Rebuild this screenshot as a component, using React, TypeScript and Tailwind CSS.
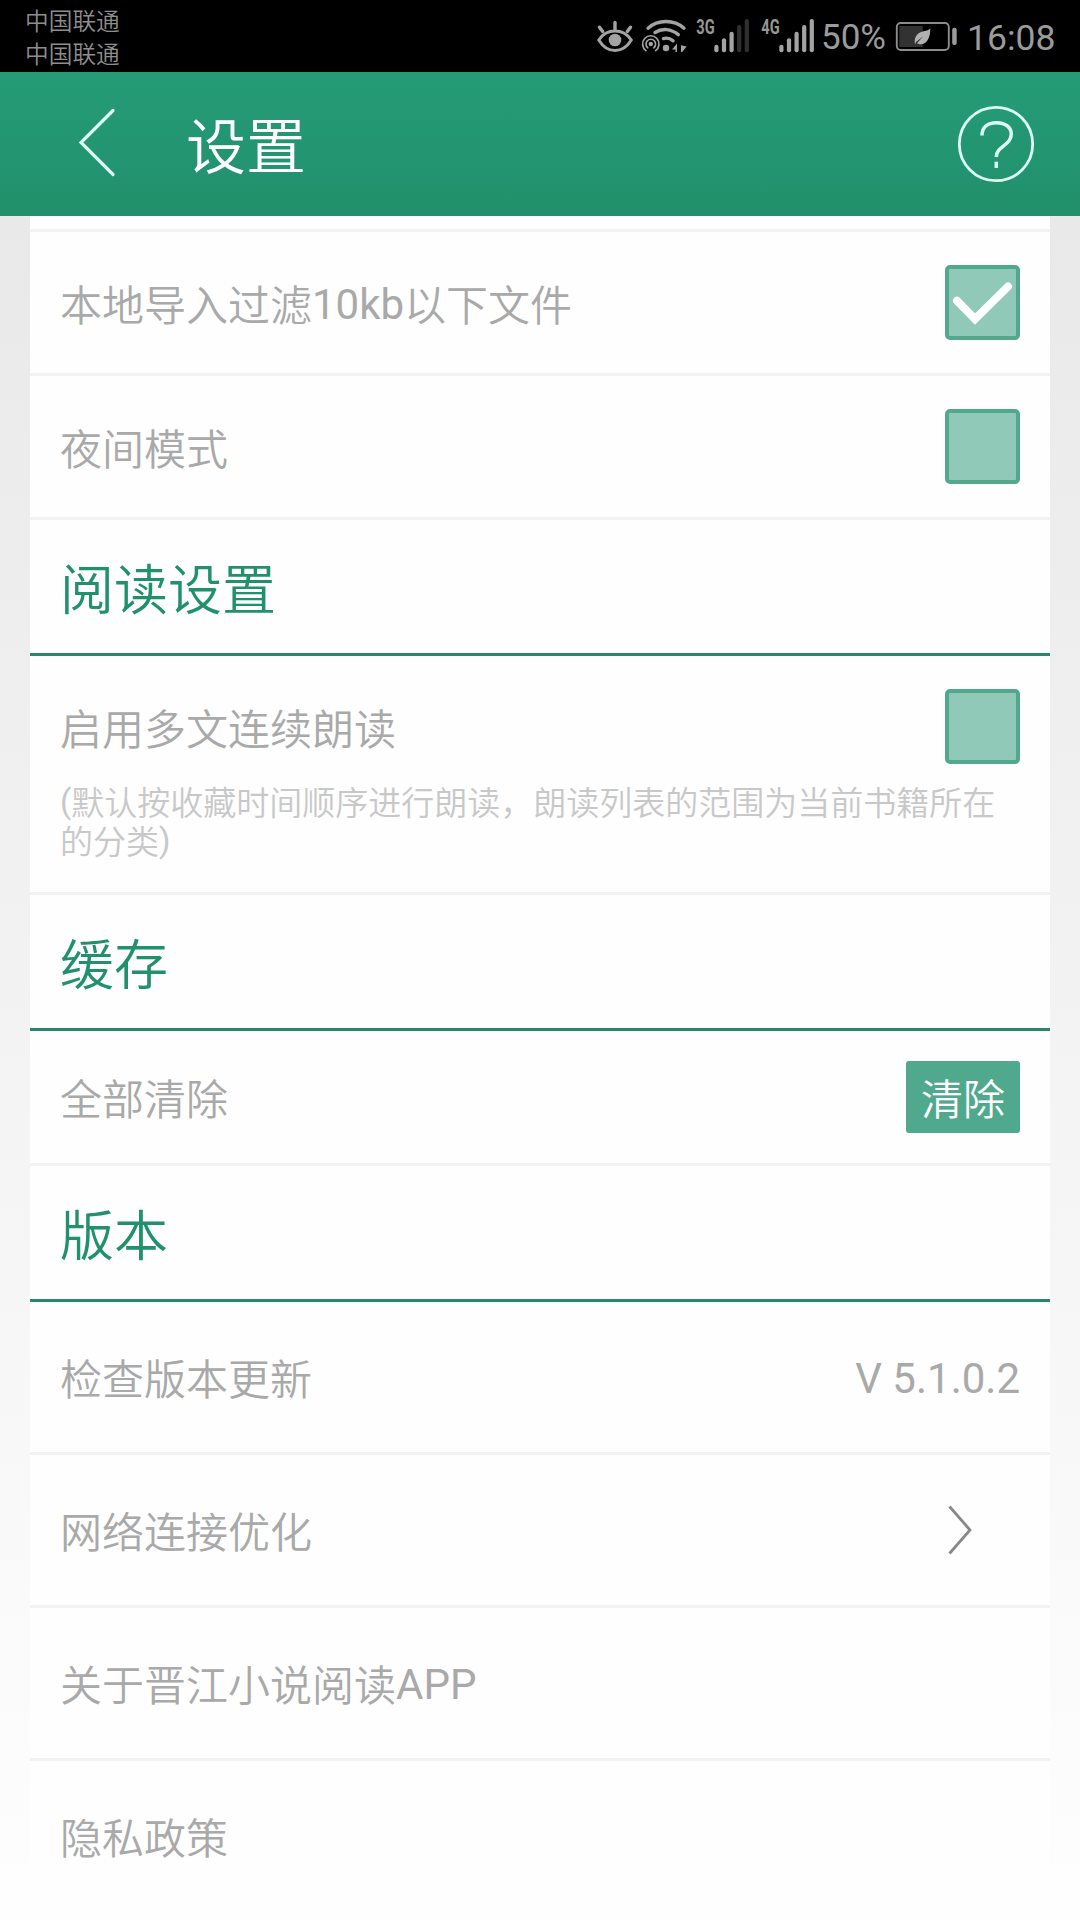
import type { ReactNode } from "react";

const ROBOTO_CJK = "font-['Roboto','Noto_Sans_CJK_SC',sans-serif]";

function EyeIcon() {
  return (
    <svg className="h-[72px] w-[50px] shrink-0" viewBox="590 0 50 72" fill="none" stroke="#a3a3a3" strokeWidth="3" strokeLinecap="round">
      <path d="M598.8 40C603 33.5 609 31 615 31s12 2.500 16.300 9C627 47 621 50.500 615 50.500S603 47 598.800 40Z" />
      <circle cx="615" cy="40" r="6.300" fill="#a3a3a3" stroke="none" />
      <path d="M615 22.500v7M599.500 27.200l3.200 4.300M630.500 27.200l-3.200 4.300" strokeWidth="3.400" />
    </svg>
  );
}

function WifiIcon() {
  return (
    <svg className="h-[72px] w-[52px] shrink-0" viewBox="640 0 52 72" fill="none" stroke="#a3a3a3" strokeWidth="3.400" strokeLinecap="round">
      <path d="M648 28.200C658 19.300 674 19.300 684 28.200" />
      <path d="M655 32.500C662 28 671 28.500 678.300 34.600" />
      <path d="M663.500 38.600C667 37.600 670.500 38.600 673 40.800" />
      <circle cx="666" cy="48" r="3.200" fill="#a3a3a3" stroke="none" />
      <circle cx="650.800" cy="44" r="2.200" fill="#a3a3a3" stroke="none" />
      <path d="M647.800 47.800a4.800 4.800 0 1 1 6 0" strokeWidth="1.700" />
      <path d="M646 50.600a8.200 8.200 0 1 1 9.600 0" strokeWidth="1.700" />
      <path d="M677 43.500v8.500h-1.500v-2.500h-3.500zM681 45.300l5.600 1.200-4.400 5.500H681z" fill="#a3a3a3" stroke="none" />
    </svg>
  );
}

const BAR_TOPS = [44.7, 38.3, 31.7, 25, 19];

function Signal({ label, active }: { label: string; active: number }) {
  return (
    <svg className="h-[72px] w-[64.500px] shrink-0" viewBox="0 0 64.500 72">
      <text x="4.300" y="33.500" fontFamily="Roboto, sans-serif" fontWeight="700" fontSize="19.800" textLength="18.400" lengthAdjust="spacingAndGlyphs" fill="#969696">
        {label}
      </text>
      {BAR_TOPS.map((top, i) => (
        <rect key={top} x={22.3 + i * 7.6} y={top} width="4.200" height={52.2 - top} rx="2" fill={i < active ? "#a3a3a3" : "#303030"} />
      ))}
    </svg>
  );
}

function BatteryIcon() {
  return (
    <svg className="h-[72px] w-[72px] shrink-0" viewBox="895 0 72 72">
      <rect x="896.800" y="23" width="52" height="27" rx="4" fill="none" stroke="#8c8c8c" strokeWidth="1.900" />
      <rect x="899.300" y="26" width="23.400" height="21" fill="#323232" />
      <rect x="952.200" y="27.700" width="4.500" height="17.300" rx="2" fill="#9a9a9a" />
      <path d="M930.300 28.500c.2 8.500-3 15-8.800 15.700-2 .2-3.500-.2-4.500-1l6-6.700-7 5.500-1 2.500c-1-4 0-8 3-10.700 4-3.300 9-2.300 12.300-5.300z" fill="#b0b0b0" />
    </svg>
  );
}

function StatusBar() {
  return (
    <div className="flex h-[72px] shrink-0 items-center justify-between bg-black text-[#9b9b9b]">
      <div className="flex flex-col pt-[5px] pl-[25px] text-[23.700px] leading-[33px] text-[#8e8e8e]">
        <span>中国联通</span>
        <span>中国联通</span>
      </div>
      <div className="flex w-[490px] items-center font-normal whitespace-nowrap text-[36px] leading-[72px]">
        <EyeIcon />
        <WifiIcon />
        <Signal label="3G" active={3} />
        <Signal label="4G" active={5} />
        <span className="w-[74px] pt-[3px] text-[35px]">50%</span>
        <BatteryIcon />
        <span className="pt-[3px] text-[35.500px]">16:08</span>
      </div>
    </div>
  );
}

function Header() {
  return (
    <header className="flex h-[144px] shrink-0 items-center bg-gradient-to-b from-[#259c76] to-[#21906b] pr-[45px] pl-[74px] text-white">
      <svg className="h-[76px] w-[46px]" viewBox="74 106 46 76" fill="none" stroke="#dcfff2" strokeWidth="3.200" strokeLinecap="round">
        <path d="M113 110.500L81 142.500l32 32" />
      </svg>
      <h1 className="ml-[66px] flex-1 pt-[10px] text-[60px] leading-[72px]">设置</h1>
      <svg className="h-[78px] w-[78px]" viewBox="957 105 78 78" fill="none" stroke="#dcfff2" strokeWidth="3.500">
        <circle cx="996" cy="144" r="36.700" strokeWidth="2.800" />
        <path d="M982 135.500C982 127 988 122.700 996.500 122.700S1011.300 127 1011.300 134C1011.300 145.500 996.300 146 996.300 157" />
        <path d="M996.300 161.700v6.200" />
      </svg>
    </header>
  );
}

function Checkbox({ checked = false }: { checked?: boolean }) {
  return (
    <div role="checkbox" aria-checked={checked} className="size-[75px] shrink-0 rounded-[5px] border-4 border-[#53a88c] bg-[#91c9b9]">
      {checked && (
        <svg className="-m-1 size-[75px]" viewBox="0 0 75 75" fill="none" stroke="#ffffff" strokeWidth="8" strokeLinecap="round">
          <path d="M12 35.700L30 54l33-32.500" />
        </svg>
      )}
    </div>
  );
}

function Row({ label, height, children }: { label: ReactNode; height: string; children?: ReactNode }) {
  return (
    <div className={`flex shrink-0 items-center justify-between border-b-[3px] border-[#f2f2f2] px-[30px] ${height}`}>
      <span className="pt-2 text-[42px] leading-[50px]">{label}</span>
      {children}
    </div>
  );
}

function Latin({ children }: { children: ReactNode }) {
  return <span className="align-[2px] leading-none font-normal">{children}</span>;
}

function SectionTitle({ children }: { children: ReactNode }) {
  return (
    <h2 className="flex h-[136px] shrink-0 items-center border-b-[3px] border-[#28866a] px-[30px] pt-[11px] text-[54px] leading-[64px] text-[#21916c]">
      {children}
    </h2>
  );
}

export default function App() {
  return (
    <div lang="zh-CN" className={`flex h-[1920px] w-[1080px] flex-col overflow-hidden font-[350] ${ROBOTO_CJK}`}>
      <StatusBar />
      <Header />
      <main className="flex flex-1 flex-col overflow-hidden bg-gradient-to-b from-[#e9e9e9] to-[#fefefe] px-[30px]">
        <div className="flex flex-1 flex-col bg-[#fefefe] text-[#a9a9a9]">
          <div className="h-[16px] shrink-0 border-b-[3px] border-[#f2f2f2]" />
          <Row label={<>本地导入过滤<Latin>10kb</Latin>以下文件</>} height="h-[144px]">
            <Checkbox checked />
          </Row>
          <Row label="夜间模式" height="h-[144px]">
            <Checkbox />
          </Row>
          <SectionTitle>阅读设置</SectionTitle>
          <div className="h-[239px] shrink-0 border-b-[3px] border-[#f2f2f2] px-[30px] pt-[33px]">
            <div className="flex items-center justify-between">
              <span className="pt-2 text-[42px] leading-[50px]">启用多文连续朗读</span>
              <Checkbox />
            </div>
            <p className="mt-[20px] text-[33px] leading-[39px] text-[#c8c8c8]">
              <Latin>(</Latin>默认按收藏时间顺序进行朗读，朗读列表的范围为当前书籍所在
              <br />
              的分类<Latin>)</Latin>
            </p>
          </div>
          <SectionTitle>缓存</SectionTitle>
          <Row label="全部清除" height="h-[135px]">
            <button className="flex h-[72px] w-[114px] items-center justify-center rounded-[3px] bg-[#50a98d] pt-2 text-[42px] leading-[50px] text-white">
              清除
            </button>
          </Row>
          <SectionTitle>版本</SectionTitle>
          <Row label="检查版本更新" height="h-[153px]">
            <span className="pt-1 text-[42px] leading-[50px] font-normal">V 5.1.0.2</span>
          </Row>
          <Row label="网络连接优化" height="h-[153px]">
            <svg className="mr-[46px] h-[54px] w-[28px]" viewBox="946 503 28 54" fill="none" stroke="#888888" strokeWidth="2.800">
              <path d="M949.500 506.500L970 530l-20.500 23.500" />
            </svg>
          </Row>
          <Row label={<>关于晋江小说阅读<Latin>APP</Latin></>} height="h-[153px]" />
          <div className="flex h-[153px] shrink-0 items-center px-[30px]">
            <span className="pt-1 text-[42px] leading-[50px]">隐私政策</span>
          </div>
        </div>
      </main>
    </div>
  );
}
